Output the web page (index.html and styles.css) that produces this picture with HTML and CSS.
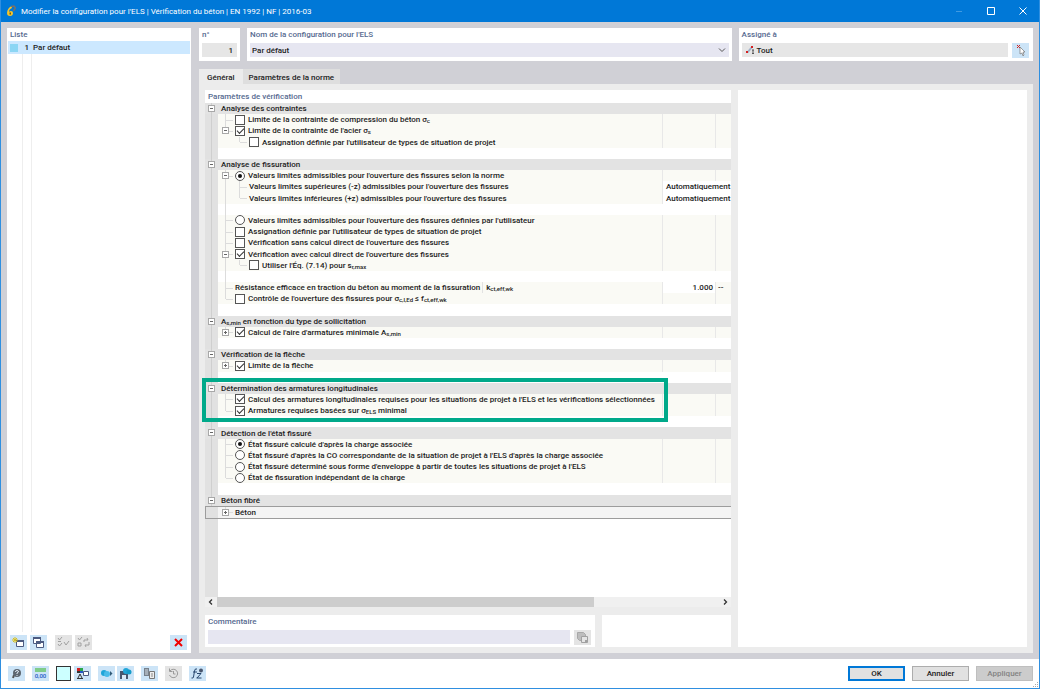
FILE: index.html
```html
<!DOCTYPE html>
<html lang="fr">

<head>
    <meta charset="UTF-8">
    <title>Modifier la configuration pour l'ELS</title>
    <link rel="stylesheet" href="styles.css">
</head>

<body>
    <header class="titlebar">
        <svg class="app-icon" viewBox="0 0 10 12"><path d="M6 1C3 2 1 5 1 8q0 3 3 3t3-3q0-2-2-2-1 0-2 1 0-3 3-4z" fill="#f5c52c"/><path d="M3.500 7.500h1.500v2H3.500z" fill="#7a5c00"/><path d="M5 1.500l3-.5 1.500 2-2 3" fill="none" stroke="#77706a" stroke-width="1.500"/></svg>
        <h1>Modifier la configuration pour l'ELS | Vérification du béton | EN 1992 | NF | 2016-03</h1>
        <button class="win-btn dim" aria-label="Réduire"><svg viewBox="0 0 8 8"><path d="M1 4.500h6"/></svg></button>
        <button class="win-btn" aria-label="Agrandir"><svg viewBox="0 0 8 8"><path d="M.5.5h7v7h-7z"/></svg></button>
        <button class="win-btn" aria-label="Fermer"><svg viewBox="0 0 8 8"><path d="M.5.5l7 7M7.500.5l-7 7"/></svg></button>
    </header>

    <main class="body">
        <aside class="list panel">
            <h2>Liste</h2>
            <div class="list-rows">
                <div class="list-row"><i class="swatch"></i><span class="num">1</span><span class="name">Par défaut</span></div>
            </div>
            <div class="list-tools">
                <button class="tool" aria-label="Nouveau"><svg viewBox="0 0 15 13"><path d="M5.500 4.500h7v6h-7z" fill="#fff" stroke="#4b5a80"/><path d="M5 4h8v2H5z" fill="#4b5a80"/><path d="M4 1v6M1 4h6M2 2l4 4M6 2L2 6" stroke="#d8c020"/></svg></button>
                <button class="tool" aria-label="Copier"><svg viewBox="0 0 15 13"><path d="M2.500 1.500h7v6h-7zM5.500 5.500h7v6h-7z" fill="#fff" stroke="#4b5a80"/><path d="M2 1h8v2H2zM5 5h8v2H5z" fill="#4b5a80"/></svg></button>
                <button class="tool off push" aria-label="Tout cocher" disabled><svg viewBox="0 0 15 13"><path d="M2 2l1.500 2L6 1M2 5.500h3v0M2 8l1.500 2L6 7M8 6l2 3 3-4" fill="none" stroke="#a0a0a0"/></svg></button>
                <button class="tool off" aria-label="Inverser" disabled><svg viewBox="0 0 15 13"><path d="M2 2l1.500 2L6 1M2 7h3v3H2zM8 6V4h4l-1-2M13 6v3H9l1 2" fill="none" stroke="#a0a0a0"/></svg></button>
                <button class="tool last" aria-label="Supprimer"><svg viewBox="0 0 15 13"><path d="M4 3l7 7M11 3l-7 7" stroke="#f00000" stroke-width="2"/></svg></button>
            </div>
        </aside>

        <div class="config">
            <div class="heads">
                <div class="panel head">
                    <h2><label for="no">n°</label></h2>
                    <input class="field num-field" id="no" value="1" readonly>
                </div>
                <div class="panel head">
                    <h2><label for="cfg">Nom de la configuration pour l'ELS</label></h2>
                    <div class="select-wrap">
                        <select class="field" id="cfg"><option>Par défaut</option></select>
                        <svg class="chevron" viewBox="0 0 8 8"><path d="M1 2.500l3 3 3-3"/></svg>
                    </div>
                </div>
                <div class="panel head">
                    <h2>Assigné à</h2>
                    <div class="assign">
                        <div class="field all"><svg viewBox="0 0 10 10"><path d="M1.500 7.500L5.500 2.500" stroke="#9fb0c8" stroke-width="2"/><path d="M0 6h2v2H0zM5 1h2v2H5z" fill="#d42020"/><path d="M6 5h2M6 8.500h2M7 5v3" stroke="#555"/></svg>Tout</div>
                        <button class="tool" aria-label="Sélectionner"><svg viewBox="0 0 15 13"><path d="M4 1l3 3M7 1L4 4" stroke="#d42020"/><path d="M7 3v7l2-1 1 3 1-1-1-3h2z" fill="#fff" stroke="#777" stroke-width=".7"/></svg></button>
                    </div>
                </div>
            </div>

            <nav class="tabs">
                <button class="tab active">Général</button>
                <button class="tab">Paramètres de la norme</button>
            </nav>

            <div class="content">
                <div class="left">
                    <section class="panel params">
                        <h2>Paramètres de vérification</h2>
                        <div class="tree">
                            <div class="row group"><button class="exp minus" aria-label="Réduire"></button><span class="cell">Analyse des contraintes</span></div>
                            <div class="row"><div class="cell"><i class="twig"></i><label><input type="checkbox"><span>Limite de la contrainte de compression du béton σ<sub>c</sub></span></label></div><span class="val"></span><span class="unit"></span></div>
                            <div class="row"><div class="cell"><i class="twig end"><button class="exp minus" aria-label="Réduire"></button></i><label><input type="checkbox" checked><span>Limite de la contrainte de l'acier σ<sub>s</sub></span></label></div><span class="val"></span><span class="unit"></span></div>
                            <div class="row"><div class="cell sub"><i class="twig end"></i><label><input type="checkbox"><span>Assignation définie par l'utilisateur de types de situation de projet</span></label></div><span class="val"></span><span class="unit"></span></div>
                            <div class="row blank"></div>

                            <div class="row group"><button class="exp minus" aria-label="Réduire"></button><span class="cell">Analyse de fissuration</span></div>
                            <div class="row"><div class="cell"><i class="twig"><button class="exp minus" aria-label="Réduire"></button></i><label><input type="radio" name="ouv" checked><span>Valeurs limites admissibles pour l'ouverture des fissures selon la norme</span></label></div><span class="val"></span><span class="unit"></span></div>
                            <div class="row"><div class="cell sub cont"><i class="twig"></i><span>Valeurs limites supérieures (-z) admissibles pour l'ouverture des fissures</span></div><span class="val wide">Automatiquement</span></div>
                            <div class="row"><div class="cell sub cont"><i class="twig end"></i><span>Valeurs limites inférieures (+z) admissibles pour l'ouverture des fissures</span></div><span class="val wide">Automatiquement</span></div>
                            <div class="row blank"><span class="cell cont"></span></div>
                            <div class="row"><div class="cell"><i class="twig"></i><label><input type="radio" name="ouv"><span>Valeurs limites admissibles pour l'ouverture des fissures définies par l'utilisateur</span></label></div><span class="val"></span><span class="unit"></span></div>
                            <div class="row"><div class="cell"><i class="twig"></i><label><input type="checkbox"><span>Assignation définie par l'utilisateur de types de situation de projet</span></label></div><span class="val"></span><span class="unit"></span></div>
                            <div class="row"><div class="cell"><i class="twig"></i><label><input type="checkbox"><span>Vérification sans calcul direct de l'ouverture des fissures</span></label></div><span class="val"></span><span class="unit"></span></div>
                            <div class="row"><div class="cell"><i class="twig"><button class="exp minus" aria-label="Réduire"></button></i><label><input type="checkbox" checked><span>Vérification avec calcul direct de l'ouverture des fissures</span></label></div><span class="val"></span><span class="unit"></span></div>
                            <div class="row"><div class="cell sub cont"><i class="twig end"></i><label><input type="checkbox"><span>Utiliser l'Éq. (7.14) pour s<sub>r,max</sub></span></label></div><span class="val"></span><span class="unit"></span></div>
                            <div class="row blank"><span class="cell cont"></span></div>
                            <div class="row"><div class="cell"><i class="twig"></i><span>Résistance efficace en traction du béton au moment de la fissuration</span><span class="symbol">k<sub>ct,eff,wk</sub></span></div><span class="val number">1.000</span><span class="unit">--</span></div>
                            <div class="row"><div class="cell"><i class="twig end"></i><label><input type="checkbox"><span>Contrôle de l'ouverture des fissures pour σ<sub>c,l,Ed</sub> ≤ f<sub>ct,eff,wk</sub></span></label></div><span class="val"></span><span class="unit"></span></div>
                            <div class="row blank"></div>

                            <div class="row group"><button class="exp minus" aria-label="Réduire"></button><span class="cell"><span>A<sub>s,min</sub> en fonction du type de sollicitation</span></span></div>
                            <div class="row"><div class="cell"><i class="twig end"><button class="exp plus" aria-label="Développer"></button></i><label><input type="checkbox" checked><span>Calcul de l'aire d'armatures minimale A<sub>s,min</sub></span></label></div><span class="val"></span><span class="unit"></span></div>
                            <div class="row blank"></div>

                            <div class="row group"><button class="exp minus" aria-label="Réduire"></button><span class="cell">Vérification de la flèche</span></div>
                            <div class="row"><div class="cell"><i class="twig end"><button class="exp plus" aria-label="Développer"></button></i><label><input type="checkbox" checked><span>Limite de la flèche</span></label></div><span class="val"></span><span class="unit"></span></div>
                            <div class="row blank"></div>

                            <div class="row group marked"><button class="exp minus" aria-label="Réduire"></button><span class="cell">Détermination des armatures longitudinales</span></div>
                            <div class="row"><div class="cell"><i class="twig"></i><label><input type="checkbox" checked><span>Calcul des armatures longitudinales requises pour les situations de projet à l'ELS et les vérifications sélectionnées</span></label></div><span class="val"></span><span class="unit"></span></div>
                            <div class="row"><div class="cell"><i class="twig end"></i><label><input type="checkbox" checked><span>Armatures requises basées sur σ<sub>ELS</sub> minimal</span></label></div><span class="val"></span><span class="unit"></span></div>
                            <div class="row blank"></div>

                            <div class="row group"><button class="exp minus" aria-label="Réduire"></button><span class="cell">Détection de l'état fissuré</span></div>
                            <div class="row"><div class="cell"><i class="twig"></i><label><input type="radio" name="etat" checked><span>État fissuré calculé d'après la charge associée</span></label></div><span class="val"></span><span class="unit"></span></div>
                            <div class="row"><div class="cell"><i class="twig"></i><label><input type="radio" name="etat"><span>État fissuré d'après la CO correspondante de la situation de projet à l'ELS d'après la charge associée</span></label></div><span class="val"></span><span class="unit"></span></div>
                            <div class="row"><div class="cell"><i class="twig"></i><label><input type="radio" name="etat"><span>État fissuré déterminé sous forme d'enveloppe à partir de toutes les situations de projet à l'ELS</span></label></div><span class="val"></span><span class="unit"></span></div>
                            <div class="row"><div class="cell"><i class="twig end"></i><label><input type="radio" name="etat"><span>État de fissuration indépendant de la charge</span></label></div><span class="val"></span><span class="unit"></span></div>
                            <div class="row blank"></div>

                            <div class="row group"><button class="exp minus" aria-label="Réduire"></button><span class="cell">Béton fibré</span></div>
                            <div class="row selected"><div class="cell"><i class="twig end"><button class="exp plus" aria-label="Développer"></button></i><span>Béton</span></div></div>
                            <div class="filler"></div>
                        </div>
                        <div class="scrollbar">
                            <svg viewBox="0 0 12 10"><path d="M7 2.500L4.500 5 7 7.500"/></svg>
                            <div class="track"><div class="thumb"></div></div>
                            <svg viewBox="0 0 12 10"><path d="M5 2.500L7.500 5 5 7.500"/></svg>
                        </div>
                    </section>
                    <div class="bottom">
                        <div class="panel head">
                            <h2><label for="com">Commentaire</label></h2>
                            <div class="assign">
                                <input class="field comment" id="com">
                                <button class="tool off" aria-label="Commentaires" disabled><svg viewBox="0 0 15 13"><path d="M2.500 1.500h6l2 2v6h-6l-2-2z" fill="#bdbdbd" stroke="#a8a8a8"/><path d="M6.500 5.500h6v6h-6z" fill="#e4e4e4" stroke="#a0a0a0"/><path d="M10 9h2v2h-2z" fill="#a0a0a0"/></svg></button>
                            </div>
                        </div>
                        <div class="panel"></div>
                    </div>
                </div>
                <div class="panel"></div>
            </div>
        </div>
    </main>

    <footer class="footer">
        <button class="tool" aria-label="Aide"><svg viewBox="0 0 15 13"><path d="M4 11l1-3" stroke="#555" stroke-width="2"/><circle cx="8" cy="6" r="4" fill="#5d6670"/><path d="M6.500 5q0-1.500 1.500-1.500T9.500 5L8 6v1M8 8v1" fill="none" stroke="#dfeaf5"/></svg></button>
        <button class="tool units" aria-label="Unités"><i></i><span>0,00</span></button>
        <button class="color" aria-label="Couleur"></button>
        <button class="tool" aria-label="Affichage"><svg viewBox="0 0 15 13"><path d="M2 1h3v3H2z" fill="#d42020"/><path d="M5 1h3v3H5z" fill="#2ba84a"/><path d="M2 4h3v2H2z" fill="#333"/><path d="M5 4h3v2H5z" fill="#2459c4"/><path d="M3 11l2-4 2 4M2 11.500h6" fill="none" stroke="#333"/><path d="M8.500 4.500h5v4h-5z" fill="#fff" stroke="#4b5a80"/></svg></button>
        <button class="tool" aria-label="Importer"><svg viewBox="0 0 15 13"><circle cx="5" cy="6" r="3" fill="#21a5d8"/><circle cx="8" cy="7" r="3" fill="#4abbe8"/><path d="M11 4l2.500 2.500L11 9z" fill="#315a78"/></svg></button>
        <button class="tool near" aria-label="Enregistrer"><svg viewBox="0 0 15 13"><path d="M2 4h8v8H2z" fill="#48566e"/><path d="M4 8h4v4H4z" fill="#dce9f5"/><circle cx="8" cy="4" r="3" fill="#21a5d8"/><circle cx="11" cy="5" r="2.500" fill="#169cc9"/></svg></button>
        <button class="tool" aria-label="Copier dans"><svg viewBox="0 0 15 13"><path d="M2 1h5v8H2z" fill="#77818c"/><path d="M3 3h3M3 5h3M3 7h3" stroke="#d5dde5"/><path d="M7.500 4.500h5v7h-5z" fill="#eee" stroke="#777"/><path d="M9 7h2M9 9h2" stroke="#888"/></svg></button>
        <button class="tool off" aria-label="Réinitialiser" disabled><svg viewBox="0 0 15 13"><path d="M4 4a4.200 4.200 0 1 1-.5 4M3.500 1.500v3h3M7.500 4v3h2" fill="none" stroke="#9a9a9a"/></svg></button>
        <button class="tool" aria-label="Formule"><svg viewBox="0 0 15 13"><path d="M7 2Q5 1 4.500 4L3.500 10q-.3 1.500-2 1M3 5h4M7 6.500h4M7 11l4-4.500M6.500 11h5" fill="none" stroke="#26466e"/><circle cx="11" cy="3.500" r="2" fill="#48566e"/></svg></button>
        <div class="actions">
            <button class="btn ok">OK</button>
            <button class="btn">Annuler</button>
            <button class="btn" disabled>Appliquer</button>
        </div>
        <svg class="grip" viewBox="0 0 6 6"><path d="M4 0h1v1H4zM2 2h1v1H2zM4 2h1v1H4zM0 4h1v1H0zM2 4h1v1H2zM4 4h1v1H4z"/></svg>
    </footer>
</body>

</html>
```
FILE: styles.css
```css
*,
*::before,
*::after {
    margin: 0;
    padding: 0;
    box-sizing: border-box;
}

body {
    display: flex;
    flex-direction: column;
    min-height: 100vh;
    border: 1px solid #2f8fe0;
    border-top: 0;
    background: #d0d0d6;
    color: #1c1c1c;
    font: 500 8px/11px Roboto, "Open Sans", sans-serif;
}

button,
input,
select {
    font: inherit;
    color: inherit;
    border: 0;
    border-radius: 0;
    background: none;
}

i {
    font-style: normal;
}

h2 {
    height: 13px;
    padding-left: 3px;
    font-size: 8px;
    line-height: 13px;
    font-weight: 500;
    color: #566a90;
}

/* title bar */
.titlebar {
    display: flex;
    align-items: center;
    height: 22px;
    padding-left: 5px;
    background: #0078d7;
    color: #fff;
}

.app-icon {
    width: 10px;
    height: 12px;
    margin-right: 5px;
}

.titlebar h1 {
    flex: 1;
    font-size: 8px;
    font-weight: 400;
}

.win-btn {
    width: 32px;
    height: 22px;
}

.win-btn svg {
    width: 8px;
    height: 8px;
    fill: none;
    stroke: #fff;
    vertical-align: middle;
}

.win-btn.dim {
    opacity: .25;
}

/* layout */
.body {
    flex: 1;
    display: flex;
    gap: 8px;
    padding: 6px;
}

.panel {
    background: #fff;
}

.list {
    display: flex;
    flex-direction: column;
    width: 184px;
}

.config {
    flex: 1;
    display: flex;
    flex-direction: column;
    min-width: 0;
}

/* list */
.list-rows {
    flex: 1;
    margin: 0 1px;
    background: linear-gradient(#eee, #eee) 14px 0 / 1px 100% no-repeat, linear-gradient(#eee, #eee) 23px 0 / 1px 100% no-repeat;
}

.list-row {
    display: flex;
    align-items: center;
    height: 13px;
    padding-left: 2px;
    background: #cce8ff;
}

.swatch {
    width: 8px;
    height: 8px;
    background: #8cd6f4;
}

.num {
    width: 11px;
    text-align: right;
}

.name {
    margin-left: 4px;
}

.list-tools {
    display: flex;
    gap: 3px;
    padding: 3px 4px 3px 3px;
}

.tool {
    display: flex;
    align-items: center;
    justify-content: center;
    flex: none;
    width: 17px;
    height: 15px;
    background: #cce4f7;
}

.tool svg {
    width: 15px;
    height: 13px;
}

.tool.off {
    background: #e4e4e4;
}

.tool.push {
    margin-left: 5px;
}

.tool.last {
    margin-left: auto;
}

/* top fields */
.heads {
    display: grid;
    grid-template-columns: 41px 484fr 294fr;
    gap: 7px;
}

.head {
    height: 33px;
}

.field {
    display: block;
    height: 14px;
    border: 0;
    outline: 0;
    appearance: none;
}

.head h2 {
    margin-bottom: 2px;
}

.num-field {
    width: 35px;
    margin-left: 3px;
    padding-right: 4px;
    background: #e6e6e6;
    text-align: right;
}

.select-wrap {
    position: relative;
    margin: 0 3px;
}

.select-wrap select {
    width: 100%;
    padding-left: 2px;
    background: #e6e6f1;
}

.chevron {
    position: absolute;
    top: 3px;
    right: 3px;
    width: 8px;
    height: 8px;
    fill: none;
    stroke: #555;
    pointer-events: none;
}

.assign {
    display: flex;
    gap: 4px;
    margin: 0 4px 0 3px;
}

.all {
    flex: 1;
    display: flex;
    align-items: center;
    gap: 1px;
    padding-left: 4px;
    background: #e6e6e6;
}

.all svg {
    width: 10px;
    height: 10px;
}

/* tabs */
.tabs {
    display: flex;
    height: 15px;
    margin-top: 8px;
}

.tab {
    padding: 2px 6px 0;
    background: #dedede;
}

.tab.active {
    padding: 2px 8px 0;
    background: #ececec;
}

.content {
    flex: 1;
    display: grid;
    grid-template-columns: 526fr 289fr;
    gap: 7px;
    padding: 6px;
    background: #ececec;
}

.left {
    display: flex;
    flex-direction: column;
    gap: 8px;
    min-width: 0;
}

.params {
    flex: 1;
    display: flex;
    flex-direction: column;
}

/* parameter tree */
.tree {
    flex: 1;
    display: flex;
    flex-direction: column;
    background: linear-gradient(#e1e1e1, #e1e1e1) 0 0 / 13px 100% no-repeat;
}

.row {
    flex: 1 1 0;
    display: grid;
    grid-template-columns: minmax(0, 1fr) 53px 16px;
    padding-left: 13px;
    position: relative;
}

.row::before {
    content: "";
    position: absolute;
    left: 6px;
    top: 0;
    bottom: 0;
    border-left: 1px solid #cfcfcf;
}

.row.selected::before {
    display: none;
}

.filler {
    flex: 7 1 0;
}

.group {
    background: #e3e3e3;
}

.group .cell {
    grid-column: 1 / -1;
    padding-left: 3px;
}

.cell {
    display: flex;
    align-items: center;
    min-width: 0;
    white-space: nowrap;
    position: relative;
    background: #fafaf5;
}

.cell label {
    display: flex;
    align-items: center;
}

.group .cell,
.blank .cell,
.selected .cell {
    background: none;
}

.sub {
    padding-left: 14px;
}

.cont::before {
    content: "";
    position: absolute;
    left: 7px;
    top: 0;
    bottom: 0;
    border-left: 1px solid #dcdcdc;
}

.twig {
    flex: none;
    align-self: stretch;
    display: flex;
    align-items: center;
    width: 17px;
    padding-left: 4px;
    position: relative;
}

.twig::before {
    content: "";
    position: absolute;
    left: 7px;
    top: 0;
    bottom: 0;
    border-left: 1px solid #dcdcdc;
}

.twig.end::before {
    bottom: 50%;
}

.twig::after {
    content: "";
    position: absolute;
    left: 8px;
    top: 50%;
    width: 7px;
    border-top: 1px solid #dcdcdc;
}

.exp {
    display: block;
    width: 7px;
    height: 7px;
    border: 1px solid #a8a8a8;
    background: linear-gradient(#666, #666) center / 3px 1px no-repeat, #fff;
    position: relative;
    z-index: 1;
}

.exp.plus {
    background: linear-gradient(#666, #666) center / 3px 1px no-repeat, linear-gradient(#666, #666) center / 1px 3px no-repeat, #fff;
}

.group > .exp {
    position: absolute;
    left: 3px;
    top: 2px;
}

.cell input {
    flex: none;
    width: 10px;
    height: 10px;
    margin-right: 3px;
    border: 1px solid #555;
    background: #fff;
    appearance: none;
}

.cell input[type="radio"] {
    border-radius: 50%;
}

.cell input[type="checkbox"]:checked::before {
    content: "";
    display: block;
    width: 7px;
    height: 4px;
    margin: 1px 0 0 1px;
    border: solid #333;
    border-width: 0 0 1px 1px;
    transform: rotate(-45deg);
}

.cell input[type="radio"]:checked::before {
    content: "";
    display: block;
    width: 4px;
    height: 4px;
    margin: 2px;
    border-radius: 50%;
    background: #111;
}

sub {
    font-size: 6px;
    line-height: 0;
    vertical-align: -1px;
}

.symbol {
    margin-left: 2px;
    padding-left: 3px;
    border-left: 1px solid #e2e2e2;
}

.val,
.unit {
    border-left: 1px solid #e8e8e8;
    background: #fafaf5;
}

.unit {
    padding-left: 2px;
}

.val.wide {
    grid-column: 2 / -1;
    padding-left: 3px;
    background: #fff;
    overflow: hidden;
}

.val.number {
    padding-right: 2px;
    background: #fff;
    text-align: right;
}

.selected {
    border: 1px solid #9c9c9c;
    border-right: 0;
    padding-left: 12px;
    background: linear-gradient(#e1e1e1, #e1e1e1) 0 0 / 12px 100% no-repeat, #f4f4f4;
}

/* frame around the reinforcement group */
.marked::after {
    content: "";
    position: absolute;
    z-index: 2;
    left: -3px;
    top: -5px;
    width: 466px;
    height: 44px;
    border: 4px solid #00a98a;
    pointer-events: none;
}

/* scrollbar */
.scrollbar {
    display: flex;
    height: 10px;
    background: #f0f0f0;
}

.scrollbar svg {
    width: 12px;
    height: 10px;
    fill: none;
    stroke: #333;
    stroke-width: 1.3;
}

.track {
    flex: 1;
}

.thumb {
    width: 75%;
    height: 10px;
    background: #cdcdcd;
}

.bottom {
    display: grid;
    grid-template-columns: 390fr 129fr;
    gap: 7px;
}

.bottom .head {
    height: 32px;
}

.comment {
    flex: 1;
    background: #e6e6f1;
}

/* footer */
.footer {
    display: flex;
    align-items: center;
    height: 29px;
    padding: 0 6px 0 7px;
    background: #fff;
    position: relative;
}

.footer .tool {
    margin-right: 7px;
}

.footer .near {
    margin-left: -5px;
}

.color {
    width: 15px;
    height: 15px;
    margin-right: 3px;
    border: 1px solid #333;
    background: #ccffff;
}

.units {
    flex-direction: column;
    color: #2459c4;
    font-size: 6px;
    line-height: 8px;
}

.units i {
    width: 11px;
    height: 4px;
    background: #7fcc8a;
}

.actions {
    display: flex;
    gap: 7px;
    margin-left: auto;
}

.btn {
    width: 57px;
    height: 15px;
    border: 1px solid #adadad;
    background: #e1e1e1;
}

.btn.ok {
    border: 2px solid #0078d7;
}

.btn:disabled {
    border-color: #bfbfbf;
    background: #ccc;
    color: #838383;
}

.grip {
    position: absolute;
    right: 0;
    bottom: 0;
    width: 6px;
    height: 6px;
    fill: #aaa;
}
```
